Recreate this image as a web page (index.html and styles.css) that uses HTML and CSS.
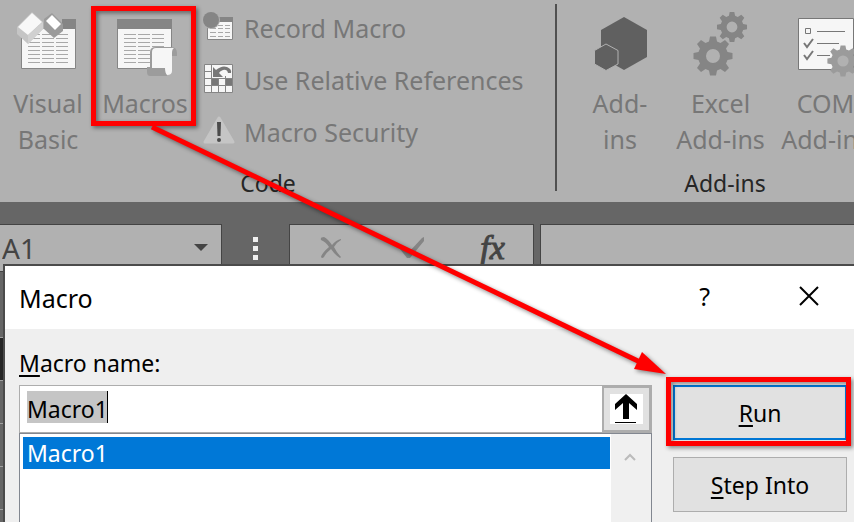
FILE: index.html
```html
<!DOCTYPE html>
<html lang="en">
<head>
<meta charset="utf-8">
<title>Macro</title>
<link rel="stylesheet" href="styles.css">
</head>
<body>
<svg class="defs" width="0" height="0" aria-hidden="true">
  <defs>
    <g id="gear">
      <path fill-rule="evenodd" d="M-3-19.500H3L4-14.500L7.500-13L12-16L16-12L13-7.500L14.500-4L19.500-3V3L14.500 4L13 7.500L16 12L12 16L7.500 13L4 14.500L3 19.500H-3L-4 14.500L-7.500 13L-12 16L-16 12L-13 7.500L-14.500 4L-19.500 3V-3L-14.500-4L-13-7.500L-16-12L-12-16L-7.500-13L-4-14.500ZM0-7A7 7 0 1 0 0 7A7 7 0 1 0 0-7Z"/>
    </g>
    <g id="sheet">
      <path fill="#f6f6f6" stroke="#858585" d="M.5.500H54.500V49.500H.5Z"/>
      <path fill="#858585" d="M0 0H55V10H0Z"/>
      <path stroke="#a8a8a8" d="M7 15.500H19M21 15.500H33M35 15.500H47M7 19.500H19M21 19.500H33M35 19.500H47M7 23.500H19M21 23.500H33M35 23.500H47M7 27.500H19M21 27.500H33M35 27.500H47M7 31.500H19M21 31.500H33M35 31.500H47M7 35.500H19M21 35.500H33M35 35.500H47M7 39.500H19M21 39.500H33M35 39.500H47M7 43.500H19M21 43.500H33M35 43.500H47"/>
    </g>
  </defs>
</svg>
<main class="app">
  <header class="ribbon">
    <section class="group group-code">
      <div class="tools">
        <button class="tool tool-vb">
          <svg width="64" height="64" viewBox="0 0 64 64">
            <use href="#sheet" x="5" y="12"/>
            <path fill="#b1b1b1" d="M3 11H46V22H5V28H3Z"/>
            <path fill="#c5c5c5" d="M1 20L16 5L27 15V22L12 37L1 27Z"/>
            <path fill="#f8f8f8" d="M2 20L16 6L26 15L12 28Z"/>
            <path fill="#d0d0d0" d="M12 28L27 15V22L12 37Z"/>
            <path fill="#9b9b9b" d="M28 12L36 6L47 17V24L38 31L28 22Z"/>
            <path fill="#fff" d="M30 14L36 8L45 17L39 23Z"/>
          </svg>
          <span>Visual<br>Basic</span>
        </button>
        <button class="tool tool-macros">
          <svg width="64" height="64" viewBox="0 0 64 64">
            <use href="#sheet" x="4" y="12"/>
            <path fill="#9c9c9c" d="M37 45Q37 40 43 40H58Q64 40 64 46V49H59V46H42V60H54V69H37Q34 69 34 65V60H37Z"/>
            <path fill="#f6f6f6" d="M39 45Q39 41 43 41H61Q59 42 59 46V64Q59 68 54 68Q52 66 52 61H39Z"/>
          </svg>
          <span>Macros</span>
        </button>
        <div class="small-tools">
          <button class="small-tool">
            <svg width="32" height="32" viewBox="0 0 32 32">
              <path fill="#f6f6f6" stroke="#858585" d="M5.500 6.500H30.500V28.500H5.500Z"/>
              <path fill="#858585" d="M5 6H31V11H5Z"/>
              <path stroke="#a8a8a8" d="M8 14.500H14M16 14.500H21M23 14.500H28M8 17.500H14M16 17.500H21M23 17.500H28M8 21.500H14M16 21.500H21M23 21.500H28M8 25.500H14M16 25.500H21M23 25.500H28"/>
              <circle cx="9" cy="9" r="9" fill="#b1b1b1"/>
              <circle cx="9" cy="9" r="8" fill="#858585"/>
            </svg>
            <span>Record Macro</span>
          </button>
          <button class="small-tool">
            <svg width="32" height="32" viewBox="0 0 32 32">
              <path fill="#f6f6f6" stroke="#858585" d="M2.500 1.500H30.500V29.500H2.500Z"/>
              <path stroke="#858585" fill="none" d="M9.500 2V29M16.500 2V29M23.500 2V29M3 8.500H30M3 15.500H30M3 22.500H30"/>
              <path fill="#777" d="M10 16H16V22H10ZM24 16H30V22H24Z"/>
              <path fill="#f6f6f6" d="M10 2H30V13H23V15H10Z"/>
              <path fill="#777" d="M11 4L14 7Q20 2 25 4Q30 6 29 10H26Q25 6 21 7Q18 8 17 10L21 14H11Z"/>
            </svg>
            <span>Use Relative References</span>
          </button>
          <button class="small-tool">
            <svg width="32" height="32" viewBox="0 0 32 32">
              <path fill="#c5c5c5" stroke="#c5c5c5" stroke-width="3" stroke-linejoin="round" d="M17 3L31 27H3Z"/>
              <path fill="#4b4b4b" d="M15 7H19L18.500 21H15.500Z"/>
              <circle cx="17" cy="25" r="2" fill="#4b4b4b"/>
            </svg>
            <span>Macro Security</span>
          </button>
        </div>
      </div>
      <h2 class="caption">Code</h2>
    </section>
    <section class="group group-addins">
      <div class="tools">
        <button class="tool tool-addins">
          <svg width="64" height="64" viewBox="0 0 64 64">
            <path fill="#606060" d="M36 10L59 23V50L36 63L13 50V23Z"/>
            <path fill="#606060" stroke="#b1b1b1" d="M18 37L30 43.500V57L18 63.500L6.500 57V43.500Z"/>
          </svg>
          <span>Add-<br>ins</span>
        </button>
        <button class="tool">
          <svg width="64" height="64" viewBox="0 0 64 64" fill="#858585">
            <use href="#gear" transform="translate(24 49)"/>
            <use href="#gear" transform="translate(43 20) scale(.77)"/>
          </svg>
          <span>Excel<br>Add-ins</span>
        </button>
        <button class="tool">
          <svg width="64" height="64" viewBox="0 0 64 64">
            <path fill="#f6f6f6" stroke="#777" d="M4.500 11.500H59.500V62.500H4.500Z"/>
            <path fill="none" stroke="#777" d="M11.500 21.500H16.500V26.500H11.500ZM23 24.500H51M23 36.500H45M23 48.500H36"/>
            <path fill="none" stroke="#777" stroke-width="2" d="M10 36L13 40L19 32M10 48L13 52L19 44"/>
            <circle cx="49" cy="54" r="7" fill="#b1b1b1"/>
            <use href="#gear" fill="#9b9b9b" transform="translate(49 54) scale(.8)"/>
          </svg>
          <span>COM<br>Add-ins</span>
        </button>
      </div>
      <h2 class="caption">Add-ins</h2>
    </section>
  </header>

  <div class="formula-bar">
    <div class="name-box">
      <input aria-label="Name box" value="A1">
      <svg width="14" height="8" viewBox="0 0 14 8"><path fill="#444" d="M0 0H14L7 7Z"/></svg>
    </div>
    <div class="dots"><i></i><i></i><i></i></div>
    <div class="formula-tools">
      <button aria-label="Cancel"><svg width="24" height="24" viewBox="0 0 24 24"><path fill="#858585" d="M2 4Q1 1 5 1Q9 3 13 9Q17 4 22 3L22 4Q18 6 15 11Q18 17 22 21L21 22Q16 19 12 13Q7 17 5 21Q3 23 2 21Q3 17 10 11Q7 6 2 4Z"/></svg></button>
      <button aria-label="Enter"><svg width="24" height="24" viewBox="0 0 24 24"><path fill="#858585" d="M0 13L4 12L9 16L22 2L24 1V5L10 22H7Z"/></svg></button>
      <button class="fx">fx</button>
    </div>
    <input class="formula" aria-label="Formula">
  </div>
  <div class="rows"><i class="corner"></i><i class="active"></i><i></i><i></i><i></i><i></i></div>

  <section class="dialog" role="dialog" aria-labelledby="dialog-title">
    <header class="title-bar">
      <h1 id="dialog-title">Macro</h1>
      <button class="help">?</button>
      <button class="close" aria-label="Close"><svg width="20" height="20" viewBox="0 0 20 20"><path fill="none" stroke="#000" stroke-width="2" d="M1 1L19 19M19 1L1 19"/></svg></button>
    </header>
    <div class="dialog-body">
      <div class="fields">
        <label for="macro-name"><u>M</u>acro name:</label>
        <div class="name-row">
          <input id="macro-name" value="Macro1">
          <button aria-label="Collapse"><svg width="33" height="30" viewBox="0 0 33 30"><path fill="#fff" d="M0 0H33V30H0Z"/><path d="M16 0L27 10V16L19 9V25H13V9L5 16V10ZM5 28H26V29H5Z"/></svg></button>
        </div>
        <div class="list">
          <ul role="listbox" aria-label="Macros"><li role="option" aria-selected="true">Macro1</li></ul>
          <div class="scroll"><svg width="12" height="10" viewBox="0 0 12 10"><path fill="none" stroke="#bbb" stroke-width="2" d="M1 8L6 3L11 8"/></svg></div>
        </div>
      </div>
      <div class="actions">
        <button class="primary"><span><u>R</u>un</span></button>
        <button><span><u>S</u>tep Into</span></button>
      </div>
    </div>
  </section>

  <svg class="callouts" width="854" height="522" viewBox="0 0 854 522" aria-hidden="true">
    <path fill="none" stroke="#f00" stroke-width="5" d="M93.500 8.500H193.500V123.500H93.500ZM668.500 379.500H848.500V443.500H668.500Z"/>
    <path stroke="#f00" stroke-width="5" d="M152 127L640 362"/>
    <path fill="#f00" d="M642 352L666 374L634 369Z"/>
  </svg>
</main>
</body>
</html>
```
FILE: styles.css
```css
* { box-sizing: border-box; }

body {
  margin: 0;
  background: #666;
  font-family: "Noto Sans", sans-serif;
  font-size: 25px;
}

button, input {
  margin: 0;
  padding: 0;
  border: 0;
  border-radius: 0;
  background: none;
  color: inherit;
  font: inherit;
  outline: 0;
}

h1, h2, ul { margin: 0; padding: 0; font-weight: 400; list-style: none; }
svg { display: block; flex: none; overflow: visible; }
.defs { position: absolute; }

.app {
  position: relative;
  height: 100vh;
  overflow: hidden;
}

.ribbon {
  display: flex;
  height: 202px;
  background: #b1b1b1;
  color: #777;
}

.group { flex: none; }
.group-code { width: 536px; }
.group-addins { position: relative; margin-left: 19px; padding-left: 17px; }
.group-addins::before {
  content: "";
  position: absolute;
  left: 0;
  top: 4px;
  width: 2px;
  height: 187px;
  background: #505050;
}

.tools { display: flex; height: 165px; }
.caption { color: #262626; font-size: 23px; line-height: 36px; text-align: center; }

.tool {
  display: flex;
  flex-direction: column;
  align-items: center;
  justify-content: flex-start;
  gap: 14px;
  width: 105px;
  padding-top: 7px;
  line-height: 36px;
  white-space: nowrap;
}
.tool-vb, .tool-addins { width: 96px; }
.tool-macros { width: 98px; }

.small-tools { margin-left: 8px; padding-top: 2px; }
.small-tool {
  display: flex;
  align-items: center;
  gap: 10px;
  height: 52px;
  white-space: nowrap;
}
.small-tool svg { margin-bottom: 2px; }

.formula-bar {
  display: flex;
  height: 48px;
  margin-top: 22px;
  color: #444;
}
.name-box, .formula-tools, .formula { border: 1px solid #444; background: #b1b1b1; }
.name-box {
  display: flex;
  align-items: center;
  width: 222px;
  border-left: 0;
  padding: 0 13px 0 2px;
}
.name-box input { flex: 1; min-width: 0; font-size: 28px; }
.dots {
  display: flex;
  flex-direction: column;
  align-items: center;
  justify-content: center;
  gap: 4px;
  width: 67px;
}
.dots i { width: 5px; height: 5px; background: #f0f0f0; }
.formula-tools { display: flex; width: 245px; }
.formula-tools button { display: grid; flex: 1; place-items: center; }
.formula-tools .fx { font: italic 34px "Liberation Serif", serif; -webkit-text-stroke: 1px #444; }
.formula { flex: 1; min-width: 0; margin-left: 6px; border-right: 0; }

.rows i { display: block; height: 43px; border-bottom: 1px solid #a0a0a0; }
.rows .corner { height: 66px; }
.rows .active { background: #262626; }

.dialog {
  position: absolute;
  inset: 264px 0 0 3px;
  border: 2px solid #4b4b4b;
  border-width: 2px 0 0 2px;
  background: #efefef;
  color: #000;
}
.title-bar {
  display: flex;
  align-items: center;
  height: 63px;
  padding: 0 35px 4px 14px;
  background: #fff;
}
.title-bar h1 { flex: 1; padding-top: 4px; font-size: 25px; }
.help { margin-right: 89px; }

.dialog-body {
  display: flex;
  gap: 21px;
  padding: 16px 7px 0 14px;
  font-size: 23px;
}
.fields { flex: 1; min-width: 0; }
.fields label { display: block; height: 40px; line-height: 36px; }
.actions {
  display: flex;
  flex-direction: column;
  gap: 17px;
  width: 174px;
  padding-top: 40px;
}
.actions button, .name-row button { background: #e1e1e1; border: 1px solid #adadad; }
.actions button { height: 55px; }
.actions .primary { border: 2px solid #0078d7; }

u { text-decoration-thickness: 2px; text-underline-offset: 3px; }

.name-row { display: flex; height: 48px; border: 1px solid #adadad; }
.name-row input {
  flex: 1;
  min-width: 0;
  padding: 0 7px;
  background:
    linear-gradient(#000, #000) 87px 5px / 1px 32px no-repeat,
    linear-gradient(#c5c5c5, #c5c5c5) 7px 5px / 80px 32px no-repeat,
    #fff;
}
.name-row button { display: grid; place-items: center; width: 49px; border-width: 2px; }

.list {
  display: flex;
  height: 140px;
  border: 1px solid #828790;
  background: #fff;
}
.list ul { flex: 1; padding: 3px 1px 0 3px; }
.list li { padding-left: 4px; background: #0078d7; color: #fff; line-height: 32px; }
.scroll { width: 40px; padding: 18px 13px; background: #f0f0f0; }

.callouts {
  position: absolute;
  left: 0;
  top: 0;
  pointer-events: none;
  filter: drop-shadow(2px 2px 2px rgb(0 0 0 / 45%));
}
```
